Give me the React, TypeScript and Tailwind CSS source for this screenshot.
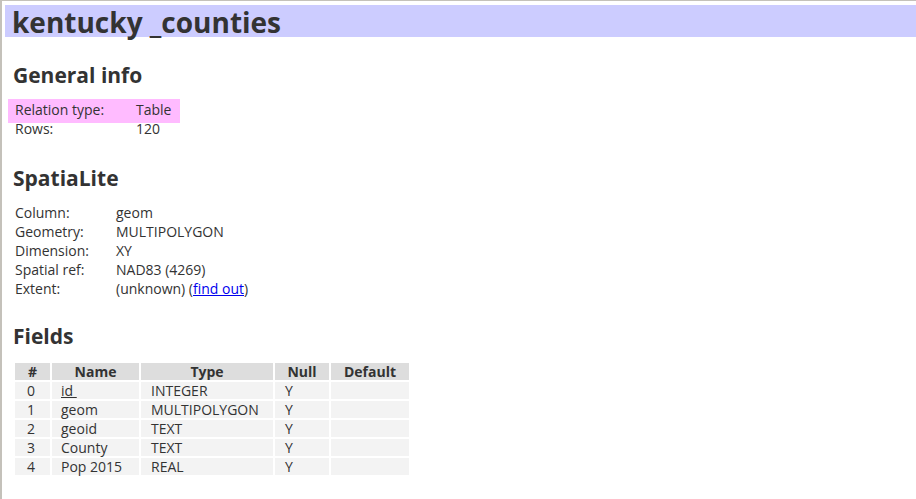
const general = [
  { label: 'Relation type:', value: 'Table', highlight: true },
  { label: 'Rows:', value: '120' },
]

const spatial = [
  { label: 'Column:', value: 'geom' },
  { label: 'Geometry:', value: 'MULTIPOLYGON' },
  { label: 'Dimension:', value: 'XY' },
  { label: 'Spatial ref:', value: 'NAD83 (4269)' },
]

const fields = [
  { id: 0, name: 'id', type: 'INTEGER', pk: true },
  { id: 1, name: 'geom', type: 'MULTIPOLYGON' },
  { id: 2, name: 'geoid', type: 'TEXT' },
  { id: 3, name: 'County', type: 'TEXT' },
  { id: 4, name: 'Pop 2015', type: 'REAL' },
]

const grid = 'grid grid-cols-[35px_87px_132px_54px_78px] gap-x-[2px]'

function Heading({ children, className }: { children: string; className: string }) {
  return (
    <h2 className={`ml-[11px] text-[21px] font-bold leading-[24px] ${className}`}>{children}</h2>
  )
}

export default function App() {
  return (
    <div
      className="min-h-[499px] border-l-2 border-t border-[#c4c1ba] bg-white pb-6 text-[14px] text-[#333]"
      style={{ fontFamily: '"Open Sans", "Noto Sans", sans-serif' }}
    >
      <h1 className="ml-[3px] mt-[4px] h-[32px] bg-[#ccccff] pl-[7px] text-[28px] font-bold leading-[34px]">
        kentucky _counties
      </h1>

      <Heading className="mt-[26px]">General info</Heading>
      <div className="ml-[6px] mt-[12px]">
        {general.map((row) => (
          <div
            key={row.label}
            className={
              row.highlight
                ? 'flex w-[172px] bg-[#ffbbff] pb-[4px] pl-[7px] pt-[1px] leading-[19px]'
                : '-mt-[4px] flex pl-[7px] leading-[19px]'
            }
          >
            <span className="w-[121px]">{row.label}</span>
            <span>{row.value}</span>
          </div>
        ))}
      </div>

      <Heading className="mt-[28px]">SpatiaLite</Heading>
      <div className="ml-[13px] mt-[13px] leading-[19px]">
        {spatial.map((row) => (
          <div key={row.label} className="flex">
            <span className="w-[101px]">{row.label}</span>
            <span>{row.value}</span>
          </div>
        ))}
        <div className="flex">
          <span className="w-[101px]">Extent:</span>
          <span>
            (unknown) (<a href="#" className="text-[#0000ee] underline">find out</a>)
          </span>
        </div>
      </div>

      <Heading className="mt-[26px]">Fields</Heading>
      <div className="ml-[13px] mt-[15px] flex flex-col gap-y-[2px] leading-[17px]">
        <div className={`${grid} font-bold`}>
          {['#', 'Name', 'Type', 'Null', 'Default'].map((h) => (
            <div key={h} className="h-[17px] bg-[#dddddd] text-center">
              {h}
            </div>
          ))}
        </div>
        {fields.map((f) => (
          <div key={f.id} className={grid}>
            <div className="h-[17px] bg-[#f3f3f3] pl-[12px]">{f.id}</div>
            <div className="h-[17px] bg-[#f3f3f3] pl-[9px]">
              {f.pk ? <span className="underline">id&nbsp;</span> : f.name}
            </div>
            <div className="h-[17px] bg-[#f3f3f3] pl-[10px]">{f.type}</div>
            <div className="h-[17px] bg-[#f3f3f3] pl-[10px]">Y</div>
            <div className="h-[17px] bg-[#f3f3f3]" />
          </div>
        ))}
      </div>
    </div>
  )
}
